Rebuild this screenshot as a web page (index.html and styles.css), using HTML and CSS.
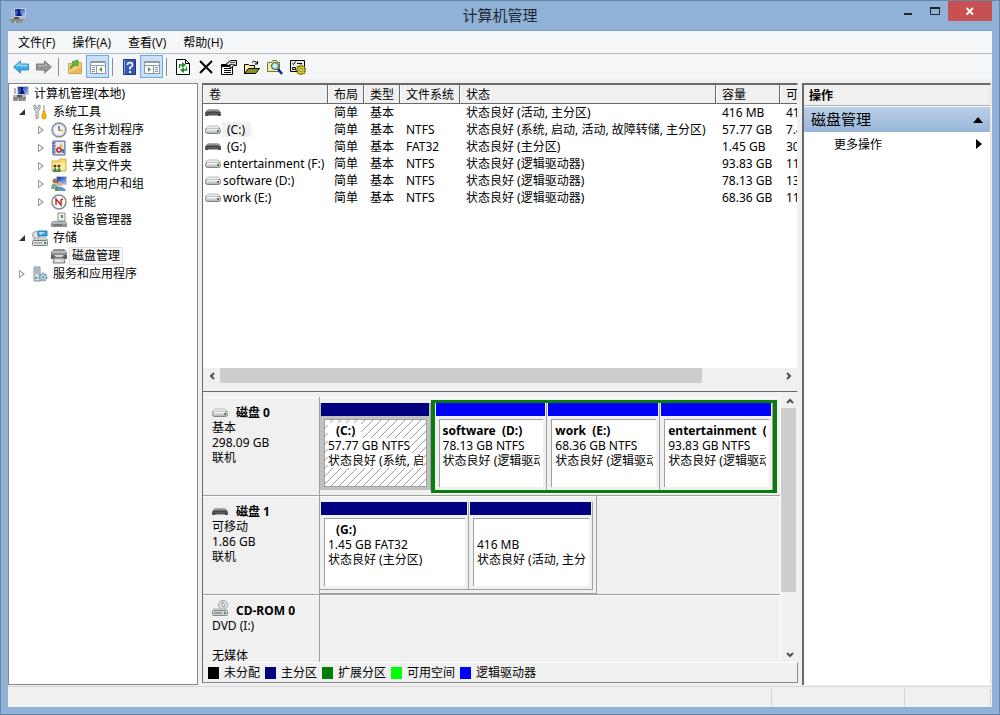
FILE: index.html
```html
<!DOCTYPE html>
<html lang="zh-CN">
<head>
  <meta charset="UTF-8" />
  <meta name="viewport" content="width=device-width, initial-scale=1.0"/>
  <title>计算机管理</title>
  <link rel="stylesheet" href="styles.css">
</head>
<body>
  <!-- shared icons -->
  <svg class="icon-defs" aria-hidden="true">
    <defs>
      <linearGradient id="metal" x1="0" y1="0" x2="0" y2="1">
        <stop offset="0" stop-color="#fafafa"/><stop offset="1" stop-color="#a9acad"/>
      </linearGradient>
      <linearGradient id="screen" x1="0" y1="0" x2="1" y2="1">
        <stop offset="0" stop-color="#0b2ba8"/><stop offset="1" stop-color="#a9c4f5"/>
      </linearGradient>
      <linearGradient id="dark" x1="0" y1="0" x2="0" y2="1">
        <stop offset="0" stop-color="#b5b7b8"/><stop offset="0.4" stop-color="#6f7172"/><stop offset="1" stop-color="#3c3e3f"/>
      </linearGradient>
      <linearGradient id="blue" x1="0" y1="0" x2="0" y2="1">
        <stop offset="0" stop-color="#7cd3f8"/><stop offset="1" stop-color="#1c8fd2"/>
      </linearGradient>
      <symbol id="computer" viewBox="0 0 16 16">
        <path d="M4 0h12v9H4z" fill="#c9cdd6"/>
        <path d="M5 1h10v7H5z" fill="url(#screen)"/>
        <path d="M7 1h3v3l2 4H6l2-4z" fill="#0a2080"/>
        <path d="M1 2h2v6H1z" fill="#b4bac4"/>
        <path d="M0 9h13v6H0z" fill="#b6b9bb"/>
        <path d="M0 12h13M1 14h3M6 14h3M10 14h2" stroke="#55595c"/>
        <path d="M4 9h5v2H4z" fill="#4d5256"/>
      </symbol>
      <symbol id="drive" viewBox="0 0 16 10">
        <path d="M3 1h10l2 2v1H1V3z" fill="#eceeee" stroke="#b9bbbb"/>
        <rect x="0.500" y="3.500" width="15" height="5" rx="2" fill="url(#metal)" stroke="#838687"/>
        <path d="M2 4h11" stroke="#fff"/>
        <path d="M12 5h2v2h-2z" fill="#4c7f52"/>
      </symbol>
      <symbol id="removable" viewBox="0 0 16 10">
        <path d="M3 1h10l2 2 1 2v2q0 1-1 1h-2l-1-1H4L3 8H1Q0 8 0 7V5l1-2z" fill="url(#dark)"/>
        <path d="M4 7h8l1 1H3z" fill="#a7a9aa"/>
        <path d="M1 5q7-2 14 0" fill="none" stroke="#3a3b3c"/>
      </symbol>
      <symbol id="cdrom" viewBox="0 0 16 16">
        <circle cx="11" cy="5" r="4.500" fill="#dfe2e3" stroke="#a2a6a8"/>
        <path d="M9 2l4 6M11 1v8" stroke="#b4bbc0"/>
        <circle cx="11" cy="5" r="1.500" fill="#fff" stroke="#9fa3a6"/>
        <path d="M2 9h12l1 2H1z" fill="#f0f1f1" stroke="#a9abab"/>
        <rect x="0.500" y="10.500" width="15" height="5" rx="1" fill="#d2d5d6" stroke="#838687"/>
        <path d="M2 13h8" stroke="#606465"/><path d="M12 12h2v2h-2z" fill="#4c8f52"/>
      </symbol>
      <symbol id="tools" viewBox="0 0 16 16">
        <path d="M2 1v4l2 2v7q1 2 2 0V7l2-2V1L6 2v3H4V2z" fill="#eceeef" stroke="#8c9093"/>
        <path d="M12 1v7" stroke="#888"/>
        <path d="M11 7h2v2l1 2v3l-2 1-2-1v-3l1-2z" fill="#f2b90d" stroke="#d99d12"/>
      </symbol>
      <symbol id="clock" viewBox="0 0 16 16">
        <circle cx="8" cy="8" r="7" fill="#eef0f5" stroke="#8b8f96" stroke-width="1.500"/>
        <circle cx="8" cy="8" r="5.500" fill="#f5f8fc" stroke="#c7ced8"/>
        <path d="M8 4v4" stroke="#3a6db0" stroke-width="1.500"/><path d="M7 8.500h5" stroke="#d89d32" stroke-width="1.500"/>
      </symbol>
      <symbol id="event" viewBox="0 0 16 16">
        <path d="M2 1h12v14H2z" fill="#a9bddb" stroke="#5c7194"/>
        <path d="M5 2h8v12H5z" fill="#e4ecf7"/>
        <path d="M1 3h3M1 6h3M1 9h3M1 12h3" stroke="#3c5482"/>
        <path d="M10 3l2 4H8z" fill="#efc22e"/><circle cx="8" cy="10" r="3" fill="#d43b33"/>
        <path d="M7 9l2 2M9 9l-2 2" stroke="#fff"/><path d="M11 9h2v4h-2z" fill="#4a79c4"/>
      </symbol>
      <symbol id="share" viewBox="0 0 16 16">
        <path d="M1 3h7l1-2h6v12H1z" fill="#f6d867" stroke="#d9b146"/>
        <path d="M2 5h12v7H2z" fill="#fbeea6"/>
        <circle cx="4" cy="8" r="1.500" fill="#6a3417"/><circle cx="8" cy="8" r="1.500" fill="#6a3417"/>
        <path d="M2 14q0-4 3-4l1 4zM6 14q0-4 3-4l1 4z" fill="#398b42"/>
      </symbol>
      <symbol id="users" viewBox="0 0 16 16">
        <path d="M5 0h11v9H5z" fill="#c5cad6"/><path d="M6 1h9v7H6z" fill="url(#screen)"/>
        <circle cx="4" cy="5" r="2.500" fill="#9b7750"/><path d="M0 13q0-6 4-5l3 2v3z" fill="#7fa7a0"/>
        <circle cx="9" cy="8" r="2.500" fill="#d9b08a"/><path d="M4 15q0-5 5-4 5 0 6 4z" fill="#6393cf"/>
        <path d="M4 15q0-4 3-4l1 4z" fill="#4e9d55"/>
      </symbol>
      <symbol id="perf" viewBox="0 0 16 16">
        <circle cx="8" cy="8" r="7" fill="#fff" stroke="#85898c" stroke-width="1.500"/>
        <path d="M5 11V5l5 6V6l2-1" fill="none" stroke="#c22828" stroke-width="1.500"/>
      </symbol>
      <symbol id="devices" viewBox="0 0 16 16">
        <path d="M7 1h7v8H7z" fill="#eef0f0" stroke="#8d9192"/><path d="M10 3h2v3h-2z" fill="#4b9a54"/>
        <path d="M2 9h12l2 2v4H0v-4z" fill="#8d9599"/>
        <path d="M1 11h14" stroke="#d7dbdc"/><path d="M3 13h8" stroke="#4f5659"/>
      </symbol>
      <symbol id="storage" viewBox="0 0 16 16">
        <circle cx="4" cy="5" r="3.500" fill="#dfe3e6" stroke="#8f9599"/>
        <path d="M6 1h9v5H6z" fill="#47a7d6" stroke="#247cad"/><path d="M7 2h6L8 5z" fill="#b9e3f5"/>
        <path d="M3 8h11l2 2H1z" fill="#eef0f0" stroke="#a5a8a9"/>
        <rect x="0.500" y="10.500" width="15" height="5" rx="1" fill="#dcdfdf" stroke="#7e8283"/>
        <path d="M2 13h8" stroke="#8b8f90"/><path d="M12 12h2v2h-2z" fill="#3e9148"/>
      </symbol>
      <symbol id="disks" viewBox="0 0 16 16">
        <path d="M3 1h10l3 3v3H0V4z" fill="#8a8d8e"/><path d="M1 4h14" stroke="#e4e6e6"/>
        <path d="M0 7h16v4H0z" fill="#5f6263"/><path d="M3 7h10l-2 2H5z" fill="#d5d7d7"/>
        <path d="M3 10h10l1 5H2z" fill="#c8cacb" stroke="#808384"/><path d="M4 13h8" stroke="#fff"/>
      </symbol>
      <symbol id="services" viewBox="0 0 16 16">
        <path d="M2 1h6v14H2z" fill="#d8dcde" stroke="#87909a"/>
        <path d="M3 3h4M3 5h4M3 7h4" stroke="#7f92a7"/><path d="M3 11h2v2H3z" fill="#5ba663"/>
        <circle cx="11" cy="11" r="3.500" fill="#c9daea" stroke="#6a90b8" stroke-width="2" stroke-dasharray="2 1"/>
        <circle cx="11" cy="11" r="1" fill="#fff" stroke="#6a90b8"/>
      </symbol>
    </defs>
  </svg>

  <div class="window">
    <header class="title-bar">
      <svg class="icon app-icon"><use href="#computer"/></svg>
      <h1>计算机管理</h1>
      <div class="window-buttons">
        <button class="win-btn" aria-label="最小化"><svg width="12" height="12"><path d="M2 9h8" stroke="#1c2733" stroke-width="2"/></svg></button>
        <button class="win-btn" aria-label="最大化"><svg width="12" height="12"><path d="M1.500 2.500h9v7h-9z" fill="none" stroke="#1c2733"/><path d="M1 3h10" stroke="#1c2733" stroke-width="2"/></svg></button>
        <button class="win-btn close" aria-label="关闭"><svg width="10" height="10"><path d="M1.500 2l6.500 6.500M8 2L1.500 8.500" stroke="#fff" stroke-width="1.800"/></svg></button>
      </div>
    </header>

    <div class="client">
      <nav class="menu-bar">
        <button>文件(F)</button>
        <button>操作(A)</button>
        <button>查看(V)</button>
        <button>帮助(H)</button>
      </nav>

      <div class="toolbar">
        <button aria-label="后退"><svg viewBox="0 0 16 16"><path d="M0.500 8L7.500 2v3h8v6h-8v3z" fill="url(#blue)" stroke="#3c8fc0"/><path d="M3 7.500l4-3V6.500h7" fill="none" stroke="#a5e2fb"/></svg></button>
        <button aria-label="前进"><svg viewBox="0 0 16 16"><path d="M15.500 8l-7-6v3h-8v6h8v3z" fill="#979797" stroke="#7a7a7a"/><path d="M2 6.500h8V5" fill="none" stroke="#bdbdbd"/></svg></button>
        <span class="separator"></span>
        <button aria-label="向上"><svg viewBox="0 0 16 16"><path d="M1.500 4.500h7l1-1h5v11h-13z" fill="#f3cf78" stroke="#cfa24e"/><path d="M2 14L14 8v6z" fill="#e9b95c"/><path d="M3 10Q4 5 7 5L5 3l6-2v6L9 6Q6 7 3 10z" fill="#66bd3f" stroke="#3f9429" stroke-width="0.800"/></svg></button>
        <button class="pressed" aria-label="显示控制台树"><svg viewBox="0 0 16 16"><path d="M0.500 2.500h15v12h-15z" fill="#fff" stroke="#8a97a5"/><path d="M1 3.500h14M1 6.500h14" stroke="#909aa5"/><path d="M6.500 7v7" stroke="#909aa5"/><path d="M2 8.500h3M2 10.500h3M2 12.500h3" stroke="#87919b"/><path d="M12 8v5L9 10.500z" fill="#43a334"/></svg></button>
        <span class="separator"></span>
        <button aria-label="帮助"><svg viewBox="0 0 16 16"><path d="M2.500 0.500h12v15h-12z" fill="#3858b5" stroke="#203889"/><path d="M3.500 1v14" stroke="#8aa5e0"/><path d="M6.500 6q0-2.500 2.500-2.500T11.500 6Q11.500 7.500 9 8.500v2" fill="none" stroke="#fff" stroke-width="1.600"/><path d="M8 12h2v2H8z" fill="#fff"/></svg></button>
        <button class="pressed" aria-label="显示操作窗格"><svg viewBox="0 0 16 16"><path d="M0.500 2.500h15v12h-15z" fill="#fff" stroke="#8a97a5"/><path d="M1 3.500h14M1 6.500h14" stroke="#909aa5"/><path d="M9.500 7v7" stroke="#909aa5"/><path d="M11 8.500h3M11 10.500h3M11 12.500h3" stroke="#87919b"/><path d="M4 8v5l3-2.500z" fill="#43a334"/></svg></button>
        <span class="separator"></span>
        <button aria-label="刷新"><svg viewBox="0 0 16 16"><path d="M1.500 0.500h9l4 4v11h-13z" fill="#fff" stroke="#000"/><path d="M10.500 1v3.500h4" fill="none" stroke="#000"/><path d="M4.500 9V6H8" fill="none" stroke="#1b8a2c" stroke-width="1.400"/><path d="M7 3l4 3-4 3z" fill="#1b8a2c"/><path d="M11.500 8v3H8" fill="none" stroke="#1b8a2c" stroke-width="1.400"/><path d="M9 8.500L5 11l4 3z" fill="#1b8a2c"/></svg></button>
        <button aria-label="删除"><svg viewBox="0 0 16 16"><path d="M2 2l12 12M14 2L2 14" stroke="#000" stroke-width="2"/></svg></button>
        <button aria-label="属性"><svg viewBox="0 0 16 16"><path d="M0.500 5.500h11v10h-11z" fill="#fff" stroke="#000"/><path d="M1 7h10" stroke="#000" stroke-width="2"/><path d="M3 9.500h7M3 11.500h7M3 13.500h7" stroke="#000"/><path d="M4.500 5.500l5-4h6v5h-3l-2 2.500-2-1 1-2.500-2 1z" fill="#ddd" stroke="#000"/><path d="M9 3.500h5M10 5.500h4" stroke="#555"/></svg></button>
        <button aria-label="打开"><svg viewBox="0 0 16 16"><path d="M0.500 14V5.500h4l1 1h5V9" fill="#f9f0a0" stroke="#000"/><path d="M0.500 14.500l4-5h11l-4 5z" fill="#918c1c" stroke="#000"/><path d="M8 3.500q3-3 5 1M13.500 2v3h-3" fill="none" stroke="#000"/></svg></button>
        <button aria-label="查找"><svg viewBox="0 0 16 16"><path d="M0.500 3.500h4l1-2h4l1 2h2v9h-12z" fill="#f1eda0" stroke="#77743c"/><circle cx="8" cy="7" r="3.500" fill="#a8eef2" stroke="#444"/><path d="M6 6.500h3" stroke="#fff"/><path d="M11 10l4 5" stroke="#16239a" stroke-width="2.500"/></svg></button>
        <button aria-label="设置"><svg viewBox="0 0 16 16"><path d="M0.500 1.500h14v11h-14z" fill="#e9e9e9" stroke="#000"/><path d="M2.500 4.500l1 1 2-3M7 4.500h5M2.500 8.500h3v2h-3zM7 7.500h3" fill="none" stroke="#000"/><path d="M10 6h2v2l2-1 1 1-1 2h2v2h-2l1 2-1 1-2-1v2h-2v-2l-2 1-1-1 1-2H6v-2h2L7 8l1-1 2 1z" fill="#e6d21c" stroke="#55500e" stroke-width="0.700"/><circle cx="11" cy="11" r="1.500" fill="#fff" stroke="#55500e" stroke-width="0.700"/></svg></button>
      </div>

      <main class="panes">
        <aside class="tree-pane">
          <ul class="tree">
            <li>
              <div class="node root"><svg class="icon"><use href="#computer"/></svg><a href="#">计算机管理(本地)</a></div>
              <ul>
                <li>
                  <div class="node"><span class="expander open"></span><svg class="icon"><use href="#tools"/></svg><a href="#">系统工具</a></div>
                  <ul>
                    <li><div class="node"><span class="expander"></span><svg class="icon"><use href="#clock"/></svg><a href="#">任务计划程序</a></div></li>
                    <li><div class="node"><span class="expander"></span><svg class="icon"><use href="#event"/></svg><a href="#">事件查看器</a></div></li>
                    <li><div class="node"><span class="expander"></span><svg class="icon"><use href="#share"/></svg><a href="#">共享文件夹</a></div></li>
                    <li><div class="node"><span class="expander"></span><svg class="icon"><use href="#users"/></svg><a href="#">本地用户和组</a></div></li>
                    <li><div class="node"><span class="expander"></span><svg class="icon"><use href="#perf"/></svg><a href="#">性能</a></div></li>
                    <li><div class="node"><span class="expander none"></span><svg class="icon"><use href="#devices"/></svg><a href="#">设备管理器</a></div></li>
                  </ul>
                </li>
                <li>
                  <div class="node"><span class="expander open"></span><svg class="icon"><use href="#storage"/></svg><a href="#">存储</a></div>
                  <ul>
                    <li><div class="node"><span class="expander none"></span><svg class="icon"><use href="#disks"/></svg><a href="#" class="selected">磁盘管理</a></div></li>
                  </ul>
                </li>
                <li><div class="node"><span class="expander"></span><svg class="icon"><use href="#services"/></svg><a href="#">服务和应用程序</a></div></li>
              </ul>
            </li>
          </ul>
        </aside>

        <section class="center-pane">
          <div class="volume-list">
            <div class="table-wrap">
              <table>
                <colgroup>
                  <col class="col-volume"><col class="col-short"><col class="col-short"><col class="col-fs"><col class="col-status"><col class="col-size"><col class="col-free">
                </colgroup>
                <thead>
                  <tr><th>卷</th><th>布局</th><th>类型</th><th>文件系统</th><th>状态</th><th>容量</th><th>可</th></tr>
                </thead>
                <tbody>
                  <tr><td><svg class="drive"><use href="#removable"/></svg></td><td>简单</td><td>基本</td><td></td><td>状态良好 (活动, 主分区)</td><td>416 MB</td><td>41</td></tr>
                  <tr><td><svg class="drive"><use href="#drive"/></svg><span class="letter current">(C:)</span></td><td>简单</td><td>基本</td><td>NTFS</td><td>状态良好 (系统, 启动, 活动, 故障转储, 主分区)</td><td>57.77 GB</td><td>7.4</td></tr>
                  <tr><td><svg class="drive"><use href="#removable"/></svg><span class="letter">(G:)</span></td><td>简单</td><td>基本</td><td>FAT32</td><td>状态良好 (主分区)</td><td>1.45 GB</td><td>30</td></tr>
                  <tr><td><svg class="drive"><use href="#drive"/></svg><span>entertainment (F:)</span></td><td>简单</td><td>基本</td><td>NTFS</td><td>状态良好 (逻辑驱动器)</td><td>93.83 GB</td><td>11</td></tr>
                  <tr><td><svg class="drive"><use href="#drive"/></svg><span>software (D:)</span></td><td>简单</td><td>基本</td><td>NTFS</td><td>状态良好 (逻辑驱动器)</td><td>78.13 GB</td><td>13</td></tr>
                  <tr><td><svg class="drive"><use href="#drive"/></svg><span>work (E:)</span></td><td>简单</td><td>基本</td><td>NTFS</td><td>状态良好 (逻辑驱动器)</td><td>68.36 GB</td><td>11</td></tr>
                </tbody>
              </table>
            </div>
            <div class="scrollbar horizontal">
              <button aria-label="向左滚动"><svg width="8" height="8"><path d="M6 1L3 4l3 3" fill="none" stroke="#505050" stroke-width="2"/></svg></button>
              <div class="track"><div class="thumb"></div></div>
              <button aria-label="向右滚动"><svg width="8" height="8"><path d="M2 1l3 3-3 3" fill="none" stroke="#505050" stroke-width="2"/></svg></button>
            </div>
          </div>

          <div class="disk-view">
            <div class="disk-scroll">
              <div class="disks">
                <div class="disk">
                  <div class="disk-label">
                    <h2><svg class="drive"><use href="#drive"/></svg>磁盘 0</h2>
                    <p>基本</p><p>298.09 GB</p><p>联机</p>
                  </div>
                  <div class="disk-map">
                    <div class="partition primary active part-c">
                      <div class="part-body"><p><b class="unnamed">(C:)</b></p><p><span>57.77 GB NTFS</span></p><p><span>状态良好 (系统, 启</span></p></div>
                    </div>
                    <div class="extended">
                      <div class="partition logical"><div class="part-body"><p><b>software&nbsp; (D:)</b></p><p>78.13 GB NTFS</p><p>状态良好 (逻辑驱动器)</p></div></div>
                      <div class="partition logical"><div class="part-body"><p><b>work&nbsp; (E:)</b></p><p>68.36 GB NTFS</p><p>状态良好 (逻辑驱动器)</p></div></div>
                      <div class="partition logical"><div class="part-body"><p><b>entertainment&nbsp; (F:)</b></p><p>93.83 GB NTFS</p><p>状态良好 (逻辑驱动器)</p></div></div>
                    </div>
                  </div>
                </div>

                <div class="disk">
                  <div class="disk-label">
                    <h2><svg class="drive"><use href="#removable"/></svg>磁盘 1</h2>
                    <p>可移动</p><p>1.86 GB</p><p>联机</p>
                  </div>
                  <div class="disk-map small">
                    <div class="partition primary part-g"><div class="part-body"><p><b class="unnamed">(G:)</b></p><p>1.45 GB FAT32</p><p>状态良好 (主分区)</p></div></div>
                    <div class="partition primary part-boot"><div class="part-body"><p>&nbsp;</p><p>416 MB</p><p>状态良好 (活动, 主分区)</p></div></div>
                  </div>
                </div>

                <div class="disk">
                  <div class="disk-label">
                    <h2><svg class="drive cd"><use href="#cdrom"/></svg>CD-ROM 0</h2>
                    <p>DVD (I:)</p><p>&nbsp;</p><p>无媒体</p>
                  </div>
                </div>
              </div>
              <div class="scrollbar vertical">
                <button aria-label="向上滚动"><svg width="8" height="8"><path d="M1 6l3-3 3 3" fill="none" stroke="#505050" stroke-width="2"/></svg></button>
                <div class="track"><div class="thumb"></div></div>
                <button aria-label="向下滚动"><svg width="8" height="8"><path d="M1 2l3 3 3-3" fill="none" stroke="#505050" stroke-width="2"/></svg></button>
              </div>
            </div>
            <ul class="legend">
              <li><i class="swatch unallocated"></i>未分配</li>
              <li><i class="swatch main"></i>主分区</li>
              <li><i class="swatch ext"></i>扩展分区</li>
              <li><i class="swatch free"></i>可用空间</li>
              <li><i class="swatch logic"></i>逻辑驱动器</li>
            </ul>
          </div>
        </section>

        <aside class="actions-pane">
          <h2>操作</h2>
          <button class="group">磁盘管理<svg width="10" height="6"><path d="M0 6l5-6 5 6z" fill="#000"/></svg></button>
          <button class="more">更多操作<svg width="6" height="10"><path d="M0 0l6 5-6 5z" fill="#000"/></svg></button>
        </aside>
      </main>

      <footer class="status-bar"><span></span><span></span><span></span></footer>
    </div>
  </div>
</body>
</html>
```

FILE: styles.css
```css
* {
  box-sizing: border-box;
}

body {
  margin: 0;
  font-family: 'Noto Sans', 'Noto Sans CJK SC', sans-serif;
  font-size: 12px;
  line-height: 15px;
  color: #000;
}

h1, h2, p, ul {
  margin: 0;
  padding: 0;
}

ul {
  list-style: none;
}

a {
  color: inherit;
  text-decoration: none;
}

button {
  margin: 0;
  padding: 0;
  border: none;
  background: none;
  font: inherit;
  color: inherit;
}

.icon-defs {
  position: absolute;
  width: 0;
  height: 0;
}

.icon {
  width: 16px;
  height: 16px;
  flex: none;
}

.drive {
  width: 16px;
  height: 10px;
  flex: none;
}

/* Window frame */
.window {
  height: 100vh;
  display: flex;
  flex-direction: column;
  padding: 0 7px 7px;
  background: #8fb2d6;
  border: 1px solid #6787a9;
  border-bottom-color: #5f80a5;
}

.title-bar {
  height: 30px;
  flex: none;
  display: grid;
  grid-template-columns: 1fr auto 1fr;
  border-bottom: 1px solid #7b9bbf;
}

.app-icon {
  margin: 7px 0 0 2px;
}

.title-bar h1 {
  font-size: 15px;
  font-weight: normal;
  line-height: 29px;
  color: #1e2833;
}

.window-buttons {
  display: flex;
  justify-content: flex-end;
}

.win-btn {
  width: 27px;
  height: 20px;
  display: flex;
  align-items: center;
  justify-content: center;
}

.win-btn.close {
  width: 44px;
  background: #c75050;
}

.client {
  flex: 1;
  min-height: 0;
  display: flex;
  flex-direction: column;
  background: #f0f0f0;
}

.menu-bar {
  height: 23px;
  flex: none;
  display: flex;
  align-items: center;
  gap: 17px;
  padding-left: 10px;
  background: #f5f6f7;
  border-bottom: 1px solid #b6bdc5;
}

.menu-bar button {
  font-family: 'Open Sans', 'Noto Sans CJK SC', sans-serif;
}

.toolbar {
  height: 25px;
  flex: none;
  display: flex;
  align-items: center;
  padding-left: 1px;
  background: #f5f6f7;
}

.toolbar button {
  width: 23px;
  height: 23px;
  display: flex;
  align-items: center;
  justify-content: center;
}

.toolbar svg {
  width: 16px;
  height: 16px;
}

.toolbar .pressed {
  background: #c9e0f7;
  border: 1px solid #69aae6;
}

.separator {
  width: 1px;
  height: 18px;
  margin: 0 4px 0 3px;
  background: #8d8d8d;
}

.panes {
  flex: 1;
  min-height: 0;
  display: flex;
  gap: 4px;
  padding: 4px 1px 1px 0;
}

/* Console tree */
.tree-pane {
  width: 190px;
  flex: none;
  padding: 1px 0 0 4px;
  background: #fff;
  border: 1px solid #828790;
}

.node {
  height: 18px;
  display: flex;
  align-items: center;
}

.node a {
  margin-left: 3px;
  padding: 0 2px;
  line-height: 16px;
  white-space: nowrap;
}

.node .selected {
  background: #f7f7f7;
  outline: 1px solid #dedede;
}

.tree ul ul {
  padding-left: 19px;
}

.expander {
  width: 19px;
  display: flex;
  padding-left: 6px;
}

.expander::before {
  content: "";
  width: 6px;
  height: 9px;
  background: #9a9a9a;
  clip-path: polygon(0 0, 100% 50%, 0 100%, 0 0, 1px 2px, 1px 7px, 4px 50%, 1px 2px);
}

.expander.open::before {
  width: 6px;
  height: 6px;
  background: #333;
  clip-path: polygon(100% 0, 100% 100%, 0 100%);
}

.expander.none::before {
  display: none;
}

/* Volume list */
.center-pane {
  flex: 1;
  min-width: 0;
  display: flex;
  flex-direction: column;
  margin-bottom: 2px;
}

.volume-list {
  height: 309px;
  flex: none;
  display: flex;
  flex-direction: column;
  border: 1px solid #696969;
  border-top-width: 2px;
  border-right-color: #f0f0f0;
  background: #f0f0f0;
}

.table-wrap {
  flex: 1;
  overflow: hidden;
  background: #fff;
}

table {
  width: 640px;
  table-layout: fixed;
  border-collapse: separate;
  border-spacing: 0;
}

.col-volume { width: 125px; }
.col-short { width: 36px; }
.col-fs { width: 60px; }
.col-status { width: 256px; }
.col-size { width: 64px; }
.col-free { width: 63px; }

th {
  height: 19px;
  padding: 0 0 0 6px;
  font-weight: normal;
  text-align: left;
  white-space: nowrap;
  background: #f0f0f0;
  border-right: 1px solid #696969;
  border-bottom: 1px solid #696969;
  box-shadow: inset 1px 0 #fff;
}

td {
  height: 17px;
  padding: 0 0 0 6px;
  white-space: nowrap;
}

td:first-child {
  display: flex;
  align-items: center;
  padding-left: 2px;
}

td span {
  padding-left: 2px;
}

.letter {
  margin-left: 1px;
  padding: 0 6px 0 5px;
}

.current {
  background: #f0f0f0;
}

/* Scrollbars */
.scrollbar {
  display: flex;
  flex: none;
  background: #f0f0f0;
}

.scrollbar button {
  width: 17px;
  height: 15px;
  display: flex;
  align-items: center;
  justify-content: center;
}

.track {
  flex: 1;
}

.thumb {
  background: #cdcdcd;
}

.horizontal {
  padding-bottom: 8px;
}

.horizontal .thumb {
  width: 86%;
  height: 15px;
}

.vertical {
  width: 18px;
  flex-direction: column;
  border-left: 1px solid #fff;
}

.vertical .thumb {
  width: 15px;
  height: 77%;
}

/* Disk map */
.disk-view {
  flex: 1;
  min-height: 0;
  display: flex;
  flex-direction: column;
  border-left: 1px solid #696969;
  border-bottom: 1px solid #8c8c8c;
}

.disk-scroll {
  flex: 1;
  min-height: 0;
  display: flex;
  padding-top: 1px;
}

.disks {
  flex: 1;
  min-width: 0;
  padding-top: 4px;
  overflow: hidden;
}

.disk {
  height: 99px;
  display: flex;
  border-bottom: 1px solid #a0a0a0;
  box-shadow: inset 0 1px #fff;
}

.disk-label {
  width: 117px;
  flex: none;
  padding: 8px 0 0 9px;
  border-right: 1px solid #a0a0a0;
}

.disk-label h2 {
  display: flex;
  align-items: center;
  gap: 8px;
  font-size: 12px;
  line-height: 15px;
}

.drive.cd {
  height: 16px;
  margin-top: -6px;
}

.disk-map {
  flex: 1;
  min-width: 0;
  display: flex;
  align-items: flex-start;
  align-self: flex-start;
  padding: 3px 3px 0 0;
}

.disk-map.small {
  flex: none;
  width: 277px;
  padding-bottom: 3px;
  border-right: 1px solid #a0a0a0;
  border-bottom: 1px solid #a0a0a0;
}

.partition {
  flex: 1;
  min-width: 0;
  margin-top: 3px;
  border-right: 1px solid #a0a0a0;
}

/* coloured band across the top of a partition */
.partition::before {
  content: "";
  display: block;
  height: 13px;
  margin: 0 1px;
  background: #000080;
}

.small .partition {
  border-bottom: 1px solid #a0a0a0;
}

.extended {
  flex: 346;
  min-width: 0;
  display: flex;
  border: 4px solid #087c0c;
  border-width: 3px 4px;
}

.extended .partition {
  margin-top: 0;
}

.logical::before {
  background: #0000ff;
}

.part-body {
  height: 68px;
  margin: 3px 3px 3px 4px;
  padding: 3px 3px 0 3px;
  overflow: hidden;
  white-space: nowrap;
  background: #fff;
  border-top: 1px solid #a0a0a0;
  border-left: 1px solid #a0a0a0;
}

.part-body p {
  overflow: hidden;
}

.part-c { flex: 112; }
.part-g { flex: 149; }
.part-boot { flex: 124; }

.active {
  background: #c0c0c0;
}

.active .part-body {
  border: 1px solid #a0a0a0;
  background: linear-gradient(135deg, #fff 45%, #a0a0a0 45%, #a0a0a0 55%, #fff 55%);
  background-size: 8px 8px;
}

.active b, .active span {
  background: #fff;
}

.unnamed {
  padding: 0 6px 0 8px;
}

.legend {
  height: 20px;
  flex: none;
  display: flex;
  align-items: center;
  gap: 5px;
  padding-left: 5px;
  border-top: 1px solid #fff;
  border-right: 1px solid #8c8c8c;
}

.legend li {
  display: flex;
  align-items: center;
  gap: 5px;
}

.swatch {
  width: 11px;
  height: 12px;
}

.unallocated { background: #000; }
.main { background: #000080; }
.ext { background: #008000; }
.free { background: #00ff00; }
.logic { background: #0000ff; }

/* Actions */
.actions-pane {
  width: 189px;
  flex: none;
  background: #fff;
  border-top: 2px solid #696969;
  border-left: 2px solid #696969;
  border-right: 1px solid #e3e3e3;
}

.actions-pane h2 {
  height: 21px;
  padding-left: 5px;
  font-size: 12px;
  line-height: 21px;
  background: #f0f0f0;
  border-bottom: 1px solid #b0b0b0;
}

.actions-pane button {
  width: 100%;
  height: 24px;
  display: flex;
  align-items: center;
  justify-content: space-between;
  padding: 0 8px 0 30px;
}

.actions-pane .group {
  height: 26px;
  padding: 0 7px;
  font-size: 15px;
  background: linear-gradient(#b9cfe8, #98b6d9);
  border-top: 1px solid #fff;
}

.status-bar {
  height: 21px;
  flex: none;
  display: grid;
  grid-template-columns: 1fr 133px 86px;
  padding: 2px 1px 1px 0;
  border-top: 1px solid #d7d7d7;
}

.status-bar span {
  border-right: 1px solid #d0d0d0;
}
```
